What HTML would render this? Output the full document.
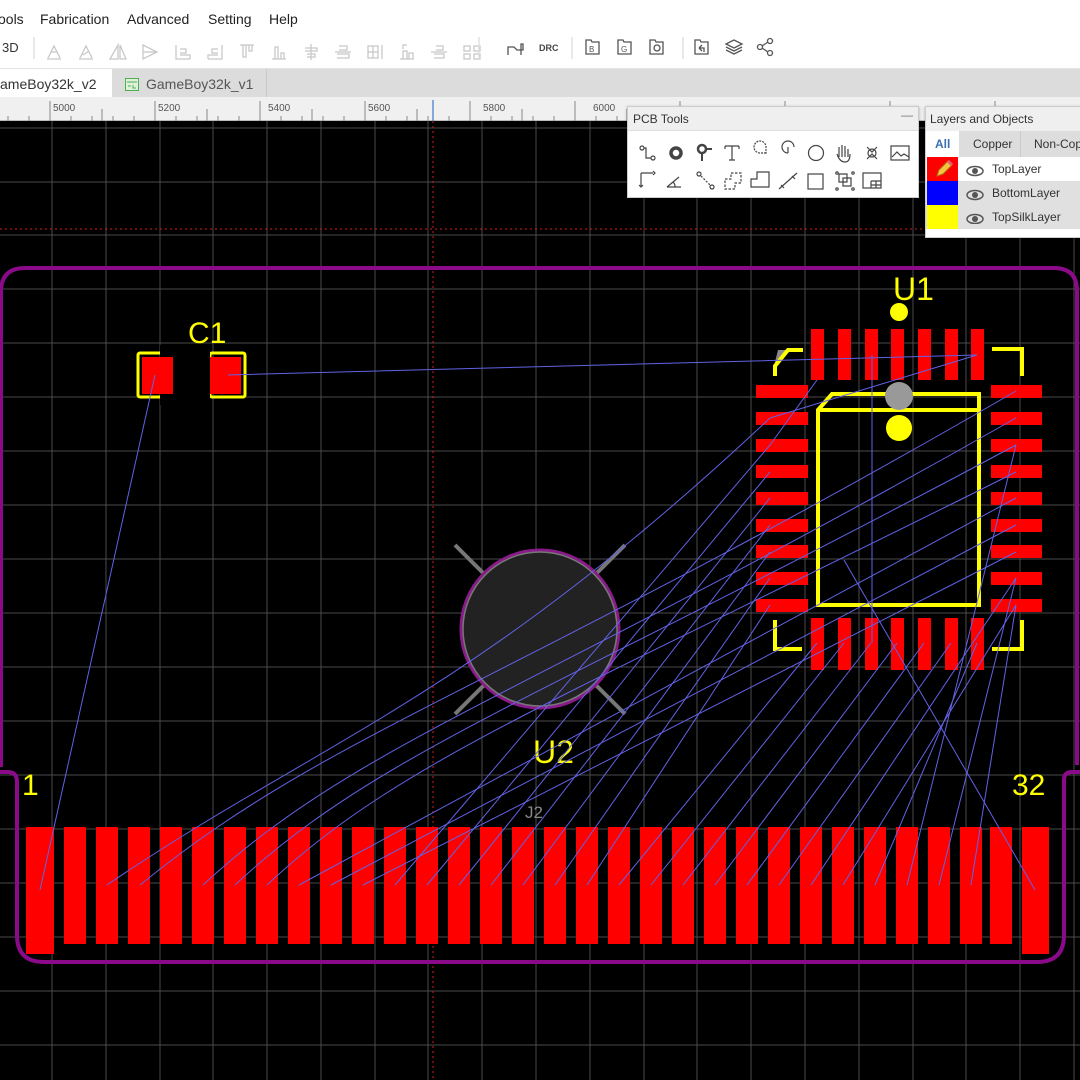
<!DOCTYPE html>
<html><head><meta charset="utf-8">
<style>
*{margin:0;padding:0;box-sizing:border-box}
body{width:1080px;height:1080px;overflow:hidden;background:#000;font-family:"Liberation Sans",Arial,sans-serif;position:relative}
.abs{position:absolute}
#menu{left:0;top:0;width:1080px;height:35px;background:#fff;font-size:14px;color:#222}
#menu span{position:absolute;top:11px}
#tool{left:0;top:35px;width:1080px;height:33px;background:#fff}
#tabs{left:0;top:68px;width:1080px;height:29px;background:#dcdcdc;border-top:1px solid #e4e4e4}
#ruler{left:0;top:97px;width:1080px;height:24px;background:#f0f0f0;border-bottom:1px solid #bbb}
.panel{background:#fff;border:1px solid #ccc;box-shadow:0 1px 3px rgba(0,0,0,.3)}
</style></head><body>
<div id="menu" class="abs">
<span style="left:-2px">ools</span><span style="left:40px">Fabrication</span><span style="left:127px">Advanced</span><span style="left:208px">Setting</span><span style="left:269px">Help</span>
</div>
<div id="tool" class="abs">
<svg width="1080" height="33" style="position:absolute;left:0;top:0" fill="none" stroke="#c8c8c8" stroke-width="1.3">
<text x="2" y="17" font-size="13" fill="#333" stroke="none" font-family="Liberation Sans">3D</text>
<line x1="34" y1="2" x2="34" y2="24" stroke="#ddd"/>
<g transform="translate(0,5)">
<path d="M47 19h14M48 18l6-12 6 12M51 12h6"/>
<path d="M79 19h14M80 18l6-12 6 12M83 15l6-4"/>
<path d="M110 19l8-14v14zM120 5v14l6 0z"/>
<path d="M143 5l14 7-14 7zM143 12h14"/>
<path d="M176 5v14h14M180 9h6v4h-6M180 15h10v4"/>
<path d="M222 5v14h-14M218 9h-6v4h6M218 15h-10v4"/>
<path d="M240 5h14M243 5v12h3v-12M249 5v6h3v-6"/>
<path d="M272 19h14M275 19v-12h3v12M281 19v-6h3v6"/>
<path d="M311 4v16M305 8h12v3h-12M307 14h8v3h-8"/>
<path d="M335 12h16M339 6h8v4h-8M337 14h12v4h-12"/>
<path d="M368 6h10v12h-10zM373 6v12M368 12h10M382 5v14"/>
<path d="M400 19h14M403 19v-8h4v8M409 19v-6h4v6M403 9v-4h4"/>
<path d="M431 12h16M436 6h7v4h-7M434 14h10v4h-10"/>
<path d="M464 6h6v5h-6zM474 6h6v5h-6zM464 14h6v5h-6zM474 14h6v5h-6z"/>
</g>
<line x1="479" y1="2" x2="479" y2="24" stroke="#ddd"/>
<path d="M508 20v-8h6l3 3h6v-6h-2v11" stroke="#555"/>
<text x="539" y="16" font-size="9" fill="#444" stroke="none" font-weight="bold" font-family="Liberation Sans">DRC</text>
<line x1="572" y1="2" x2="572" y2="24" stroke="#ddd"/>
<g stroke="#555"><path d="M586 5h5l1 2h7v12h-13z"/><text x="589" y="17" font-size="8" fill="#555" stroke="none">B</text>
<path d="M618 5h5l1 2h7v12h-13z"/><text x="621" y="17" font-size="8" fill="#555" stroke="none">G</text>
<path d="M650 5h5l1 2h7v12h-13z"/><circle cx="657" cy="13" r="3"/>
</g>
<line x1="683" y1="2" x2="683" y2="24" stroke="#ddd"/>
<g stroke="#555"><path d="M695 5h5l1 2h7v12h-13z"/><path d="M699 13l3-3M699 13l3 3M699 13h5v4"/>
<path d="M726 9l8-4 8 4-8 4zM726 12l8 4 8-4M726 15l8 4 8-4"/>
<circle cx="760" cy="12" r="2.5"/><circle cx="770" cy="6" r="2.5"/><circle cx="770" cy="18" r="2.5"/><path d="M762 11l6-4M762 13l6 4"/></g>
</svg>
</div>
<div id="tabs" class="abs">
<div class="abs" style="left:0;top:0;width:112px;height:29px;background:#fff;font-size:14px;color:#333;padding:7px 0 0 0">ameBoy32k_v2</div>
<div class="abs" style="left:112px;top:0;width:155px;height:29px;border-right:1px solid #c8c8c8;font-size:14px;color:#555;padding:7px 0 0 34px">GameBoy32k_v1</div>
<svg class="abs" style="left:125px;top:9px" width="14" height="13"><rect x="0.5" y="0.5" width="13" height="12" fill="#dff0dc" stroke="#4caf50"/><path d="M2 4h10M3 8h3M8 7v3h3" stroke="#4caf50" fill="none"/></svg>
</div>
<div id="ruler" class="abs">
<svg width="1080" height="24" font-family="Liberation Sans" font-size="10" fill="#555">
<g stroke="#888" stroke-width="1">
<path d="M50 4v20M155 4v20M260 4v20M365 4v20M470 4v20M575 4v20M680 4v20M785 4v20M890 4v20M995 4v20M102 12v12M207 12v12M312 12v12M417 12v12M522 12v12M627 12v12"/>
<path d="M8 19v5M29 19v5M71 19v5M92 19v5M113 19v5M134 19v5M176 19v5M197 19v5M218 19v5M239 19v5M281 19v5M302 19v5M323 19v5M344 19v5M386 19v5M407 19v5M428 19v5M449 19v5M491 19v5M512 19v5M533 19v5M554 19v5M596 19v5M617 19v5"/>
</g>
<line x1="433" y1="3" x2="433" y2="24" stroke="#1565c0"/>
<text x="53" y="14">5000</text><text x="158" y="14">5200</text><text x="268" y="14">5400</text><text x="368" y="14">5600</text><text x="483" y="14">5800</text><text x="593" y="14">6000</text>
</svg>
</div>

<svg class="abs" style="left:0;top:121px" width="1080" height="959">
<g transform="translate(0,-121)">
<g stroke="#4a4a4a" stroke-width="1">
<path d="M52 121V1080M106 121V1080M160 121V1080M213 121V1080M267 121V1080M321 121V1080M375 121V1080M428 121V1080M482 121V1080M536 121V1080M590 121V1080M644 121V1080M697 121V1080M751 121V1080M805 121V1080M859 121V1080M913 121V1080M966 121V1080M1020 121V1080M1074 121V1080"/>
<path d="M0 128H1080M0 182H1080M0 235H1080M0 289H1080M0 343H1080M0 397H1080M0 451H1080M0 505H1080M0 559H1080M0 613H1080M0 667H1080M0 721H1080M0 775H1080M0 829H1080M0 883H1080M0 937H1080M0 991H1080M0 1045H1080"/>
</g>
<line x1="0" y1="229" x2="1080" y2="229" stroke="#d02020" stroke-dasharray="2,3"/>
<line x1="433" y1="121" x2="433" y2="1080" stroke="#d02020" stroke-dasharray="2,3"/>

<path d="M0 772H8Q17 772 17 782V935Q17 962 44 962H1037Q1064 962 1064 935V780Q1064 772 1072 772H1080M1 767V292Q1 268 25 268H1054Q1077 268 1077 291V765" fill="none" stroke="#8a0a8a" stroke-width="4"/>

<!-- C1 -->
<rect x="138" y="353" width="35" height="44" fill="none" stroke="#ff0" stroke-width="3" rx="2"/>
<rect x="210" y="353" width="35" height="44" fill="none" stroke="#ff0" stroke-width="3" rx="2"/>
<rect x="160" y="345" width="50" height="60" fill="#000"/>
<rect x="142" y="357" width="31" height="37" fill="#f00"/>
<rect x="210" y="357" width="31" height="37" fill="#f00"/>
<text x="188" y="343" font-size="30" fill="#ff0">C1</text>

<!-- U2 -->
<path d="M455 545L625 714M625 545L455 714" stroke="#777" stroke-width="4"/>
<circle cx="540" cy="629" r="79" fill="#222" stroke="#8a1a8a" stroke-width="3"/>
<circle cx="540" cy="629" r="77" fill="none" stroke="#777" stroke-width="1.5"/>
<text x="533" y="763" font-size="32" fill="#ff0">U2</text>
<text x="525" y="818" font-size="17" fill="#888">J2</text>

<!-- U1 -->
<g fill="#f00">
<rect x="811" y="329" width="13" height="51"/><rect x="838" y="329" width="13" height="51"/><rect x="865" y="329" width="13" height="51"/><rect x="891" y="329" width="13" height="51"/><rect x="918" y="329" width="13" height="51"/><rect x="945" y="329" width="13" height="51"/><rect x="971" y="329" width="13" height="51"/>
<rect x="811" y="618" width="13" height="52"/><rect x="838" y="618" width="13" height="52"/><rect x="865" y="618" width="13" height="52"/><rect x="891" y="618" width="13" height="52"/><rect x="918" y="618" width="13" height="52"/><rect x="945" y="618" width="13" height="52"/><rect x="971" y="618" width="13" height="52"/>
<rect x="756" y="385" width="52" height="13"/><rect x="756" y="412" width="52" height="13"/><rect x="756" y="439" width="52" height="13"/><rect x="756" y="465" width="52" height="13"/><rect x="756" y="492" width="52" height="13"/><rect x="756" y="519" width="52" height="13"/><rect x="756" y="545" width="52" height="13"/><rect x="756" y="572" width="52" height="13"/><rect x="756" y="599" width="52" height="13"/>
<rect x="991" y="385" width="51" height="13"/><rect x="991" y="412" width="51" height="13"/><rect x="991" y="439" width="51" height="13"/><rect x="991" y="465" width="51" height="13"/><rect x="991" y="492" width="51" height="13"/><rect x="991" y="519" width="51" height="13"/><rect x="991" y="545" width="51" height="13"/><rect x="991" y="572" width="51" height="13"/><rect x="991" y="599" width="51" height="13"/>
</g>
<path d="M778 350h10l-14 18v-2z" fill="#888"/>
<g fill="none" stroke="#ff0" stroke-width="4">
<path d="M775 376v-10l13-16h15M992 349h30v27M775 620v29h27M992 649h30v-29"/>
<path d="M818 410l14-16h147v211h-161zM818 410h161"/>
</g>
<circle cx="899" cy="396" r="14" fill="#999"/>
<circle cx="899" cy="428" r="13" fill="#ff0"/>
<circle cx="899" cy="312" r="9" fill="#ff0"/>
<text x="893" y="300" font-size="32" fill="#ff0">U1</text>

<!-- J2 connector -->
<g fill="#f00">
<rect x="26" y="827" width="28" height="127"/>
<rect x="1022" y="827" width="27" height="127"/>
<rect x="64" y="827" width="22" height="117"/><rect x="96" y="827" width="22" height="117"/><rect x="128" y="827" width="22" height="117"/><rect x="160" y="827" width="22" height="117"/><rect x="192" y="827" width="22" height="117"/><rect x="224" y="827" width="22" height="117"/><rect x="256" y="827" width="22" height="117"/><rect x="288" y="827" width="22" height="117"/><rect x="320" y="827" width="22" height="117"/><rect x="352" y="827" width="22" height="117"/>
<rect x="384" y="827" width="22" height="117"/><rect x="416" y="827" width="22" height="117"/><rect x="448" y="827" width="22" height="117"/><rect x="480" y="827" width="22" height="117"/><rect x="512" y="827" width="22" height="117"/><rect x="544" y="827" width="22" height="117"/><rect x="576" y="827" width="22" height="117"/><rect x="608" y="827" width="22" height="117"/><rect x="640" y="827" width="22" height="117"/><rect x="672" y="827" width="22" height="117"/>
<rect x="704" y="827" width="22" height="117"/><rect x="736" y="827" width="22" height="117"/><rect x="768" y="827" width="22" height="117"/><rect x="800" y="827" width="22" height="117"/><rect x="832" y="827" width="22" height="117"/><rect x="864" y="827" width="22" height="117"/><rect x="896" y="827" width="22" height="117"/><rect x="928" y="827" width="22" height="117"/><rect x="960" y="827" width="22" height="117"/><rect x="990" y="827" width="22" height="117"/>
</g>
<text x="22" y="795" font-size="30" fill="#ff0">1</text>
<text x="1012" y="795" font-size="30" fill="#ff0">32</text>

<!-- ratsnest -->
<g stroke="#6262e6" stroke-width="1" fill="none">
<path d="M155 375L40 890M228 375L977 355"/>
<path d="M107 885C320 740 470 700 770 418M140 885C330 730 500 690 1016 391M203 885C360 740 520 700 1016 418M235 885C380 750 540 700 1016 445M267 885C400 760 560 700 1016 472M299 885L1016 498M331 885L1016 525M363 885L1016 552"/>
<path d="M395 885L770 445M427 885L770 472M459 885L770 498M491 885L770 525M523 885L770 552M555 885L770 578M587 885L770 605"/>
<path d="M619 885L817 643M651 885L844 643M683 885L871 643M715 885L897 643M747 885L924 643M779 885L951 643M811 885L1016 578M843 885L1016 605M875 885L977 643M907 885L1016 445M939 885L1016 578M971 885L1016 605M1035 890L844 560"/>
<path d="M872 355V643M770 418L977 355M817 380L770 445"/>
</g>
</g>
</svg>

<!-- PCB Tools panel -->
<div class="abs panel" style="left:627px;top:106px;width:292px;height:92px">
<div style="height:24px;background:#efefef;border-bottom:1px solid #ddd;font-size:12px;color:#333;padding:5px 0 0 5px">PCB Tools<span style="position:absolute;right:5px;top:1px;color:#777">—</span></div>
<svg width="290" height="66" fill="none" stroke="#444" stroke-width="1.2">
<g transform="translate(-627,-130)">
<circle cx="641" cy="147" r="2"/><path d="M643 147h2v10h5"/><circle cx="652" cy="157" r="2"/>
<circle cx="675" cy="152" r="5" stroke-width="3.5"/>
<circle cx="701" cy="148" r="4" stroke-width="2.5"/><path d="M701 152v8M705 148h6" stroke-width="2"/>
<path d="M724 145h14M724 145v3M738 145v3M731 145v14M728 159h6"/>
<path d="M765 152h-6a6 6 0 1 1 6-6z" stroke-dasharray="2,1"/>
<path d="M787 152a6 6 0 1 1 6-6" /><path d="M787 152v-6"/>
<circle cx="815" cy="152" r="7.5"/>
<path d="M838 156v-10M841 156v-12M844 156v-11M847 156v-8M836 153c2 6 5 8 8 8s5-2 5-8"/>
<path d="M866 146l5 5 5-5M866 158l5-5 5 5"/><circle cx="871" cy="152" r="4"/>
<rect x="890" y="145" width="18" height="14"/><path d="M891 156l5-5 4 4 3-2 5 3"/>
<path d="M640 172h12M640 172v14M652 170l2 2-2 2M638 184l2 2 2-2"/>
<path d="M666 186h14M666 186l12-10M674 186a6 6 0 0 0-2-5"/>
<circle cx="698" cy="173" r="2"/><circle cx="711" cy="186" r="2"/><path d="M700 175l9 9" stroke-dasharray="2,1.5"/>
<path d="M724 178h6v-6h10v10h-6v6h-10z" stroke-dasharray="2.5,1.5"/>
<path d="M750 186v-8h6v-7h12v15z"/>
<path d="M778 188l18-16M780 184l3 3M791 175l3 3"/>
<rect x="807" y="173" width="15" height="15"/>
<path d="M838 173h8v8h-8zM842 177h8v8h-8z"/><circle cx="836" cy="172" r="1.2"/><circle cx="852" cy="172" r="1.2"/><circle cx="836" cy="188" r="1.2"/><circle cx="852" cy="188" r="1.2"/>
<rect x="862" y="172" width="18" height="15"/><path d="M870 180h10M870 180v7M875 180v7M870 184h10"/>
</g></svg>
</div>

<!-- Layers panel -->
<div class="abs panel" style="left:925px;top:106px;width:160px;height:132px;border-right:none">
<div style="height:24px;background:#efefef;font-size:12px;color:#333;padding:5px 0 0 4px;white-space:nowrap">Layers and Objects</div>
<div style="position:relative;height:26px;background:#ddd;font-size:12px">
<div class="abs" style="left:0;top:0;width:33px;height:26px;background:#fff;color:#3d6fb0;font-weight:bold;padding:6px 0 0 9px">All</div>
<div class="abs" style="left:33px;top:0;width:62px;height:26px;color:#333;padding:6px 0 0 14px;border-right:1px solid #ccc">Copper</div>
<div class="abs" style="left:96px;top:0;width:70px;height:26px;color:#333;padding:6px 0 0 12px;white-space:nowrap">Non-Cop</div>
</div>
<div style="position:relative;height:24px;background:#fff;font-size:12px;color:#333">
<div class="abs" style="left:1px;top:0;width:31px;height:24px;background:#f00"></div>
<svg class="abs" style="left:7px;top:3px" width="20" height="18"><path d="M4 16l2-6 9-9 4 4-9 9z" fill="#f5c542" stroke="#b07a10"/><path d="M15 1l4 4" stroke="#e06070" stroke-width="3"/></svg>
<span class="abs" style="left:66px;top:5px">TopLayer</span></div>
<div style="position:relative;height:24px;background:#e0e0e0;font-size:12px;color:#333">
<div class="abs" style="left:1px;top:0;width:31px;height:24px;background:#00f"></div>
<span class="abs" style="left:66px;top:5px">BottomLayer</span></div>
<div style="position:relative;height:24px;background:#e0e0e0;font-size:12px;color:#333">
<div class="abs" style="left:1px;top:0;width:31px;height:24px;background:#ff0"></div>
<span class="abs" style="left:66px;top:5px">TopSilkLayer</span></div>
<svg class="abs" style="left:40px;top:57px" width="20" height="60" fill="#555">
<g><ellipse cx="9" cy="7" rx="8" ry="4.5" fill="none" stroke="#555" stroke-width="1.5"/><circle cx="9" cy="7" r="3"/></g>
<g transform="translate(0,24)"><ellipse cx="9" cy="7" rx="8" ry="4.5" fill="none" stroke="#555" stroke-width="1.5"/><circle cx="9" cy="7" r="3"/></g>
<g transform="translate(0,48)"><ellipse cx="9" cy="7" rx="8" ry="4.5" fill="none" stroke="#555" stroke-width="1.5"/><circle cx="9" cy="7" r="3"/></g>
</svg>
</div>
</body></html>
